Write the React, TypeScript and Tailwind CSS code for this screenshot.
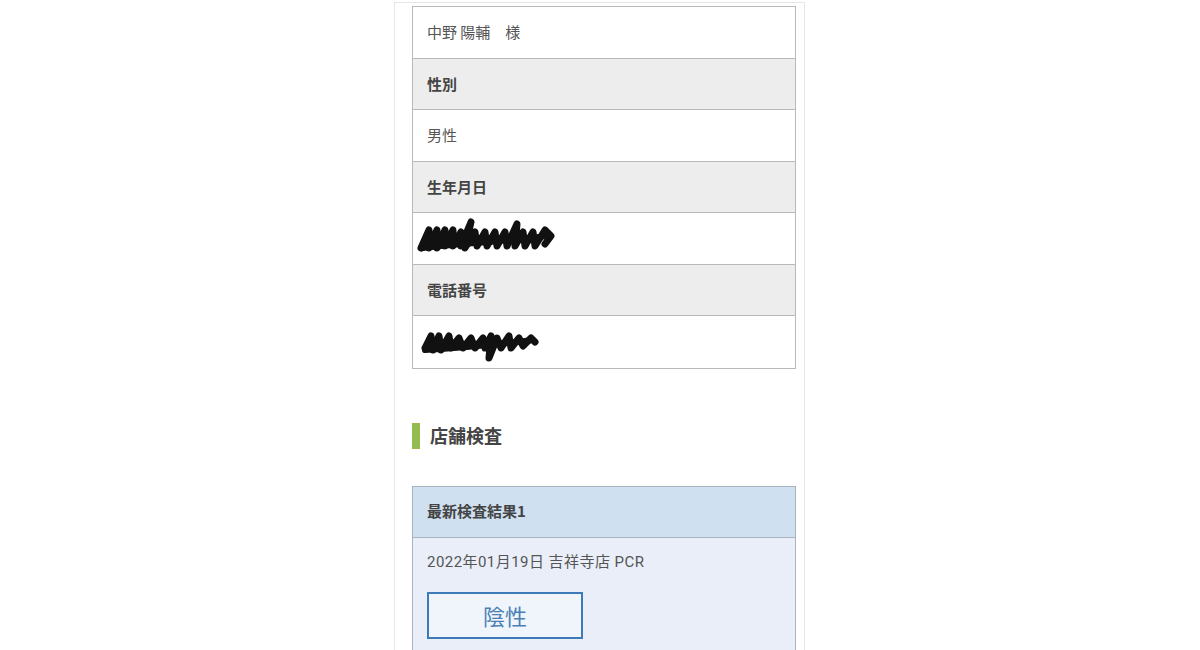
import React from "react";

const font = { fontFamily: '"Noto Sans CJK JP", "Noto Sans", sans-serif' };
const latin = { fontFamily: 'Roboto, "Noto Sans CJK JP", sans-serif' };

function Scribble1() {
  return (
    <svg width="140" height="40" viewBox="0 0 140 40" className="block">
      <path
        d="M4 30 L12 12 L12 30 L20 12 L20 30 L28 12 L28 28 L36 12 L36 28 L44 14 L44 28 L54 4 L48 30 L58 14 L60 28 L68 14 L70 28 L78 14 L80 28 L88 14 L90 28 L100 6 L98 28 L106 14 L108 28 L116 14 L118 28 L128 12 L134 18 L128 26"
        fill="none"
        stroke="#111"
        strokeWidth="7"
        strokeLinecap="round"
        strokeLinejoin="round"
      />
      <path d="M6 30 C40 26 80 24 130 18" fill="none" stroke="#111" strokeWidth="6" strokeLinecap="round" />
    </svg>
  );
}

function Scribble2() {
  return (
    <svg width="125" height="40" viewBox="0 0 125 40" className="block">
      <path
        d="M6 26 L12 14 L14 28 L20 14 L22 28 L30 14 L32 26 L40 16 L44 26 L52 16 L56 26 L64 16 L66 26 L72 14 L70 36 L78 16 L82 26 L90 14 L92 26 L100 16 L104 24 L112 16 L116 20"
        fill="none"
        stroke="#111"
        strokeWidth="7"
        strokeLinecap="round"
        strokeLinejoin="round"
      />
      <path d="M6 28 C40 26 80 22 114 18" fill="none" stroke="#111" strokeWidth="6" strokeLinecap="round" />
    </svg>
  );
}

function Row({ children, head, last }: { children: React.ReactNode; head?: boolean; last?: boolean }) {
  return (
    <div
      className={
        "h-[51.5px] flex items-center px-[14px] text-[15px] " +
        (last ? "" : "border-b border-[#b9b9b9] ") +
        (head ? "bg-[#ededed] font-bold text-[#444]" : "bg-white text-[#555]")
      }
    >
      {children}
    </div>
  );
}

export default function App() {
  return (
    <div className="w-[1200px] h-[650px] bg-white overflow-hidden" style={font}>
      <div className="ml-[394px] mt-[2px] w-[411px] h-[648px] border-l border-r border-t border-[#e6e6e6] pl-[17px] pt-[3px]">
        <div className="w-[384px] border border-[#b9b9b9]">
          <Row>中野 陽輔　様</Row>
          <Row head>性別</Row>
          <Row>男性</Row>
          <Row head>生年月日</Row>
          <div className="h-[51.5px] flex items-center pl-[4px] bg-white border-b border-[#b9b9b9]">
            <Scribble1 />
          </div>
          <Row head>電話番号</Row>
          <div className="h-[51.5px] flex items-center pl-[6px] bg-white">
            <Scribble2 />
          </div>
        </div>

        <div className="mt-[54px] flex items-center h-[26px]">
          <div className="w-[8px] h-[26px] bg-[#94bb4e]" />
          <div className="ml-[10px] text-[18px] font-bold text-[#444]">店舗検査</div>
        </div>

        <div className="mt-[37px] w-[384px] border border-[#a9b3bd] bg-[#e9eef8]">
          <div className="h-[51px] bg-[#cfe0f1] border-b border-[#a9b3bd] flex items-center px-[14px] text-[15px] font-bold text-[#444]">
            最新検査結果1
          </div>
          <div className="px-[14px] pt-[13px] pb-[20px]">
            <div className="text-[15px] text-[#555] leading-[22px] tracking-[0.45px]" style={latin}>
              2022年01月19日 吉祥寺店 PCR
            </div>
            <div className="mt-[19px] w-[156px] h-[47px] border-2 border-[#3d7ab8] bg-[#f0f4fb] flex items-center justify-center text-[22px] text-[#4a80b6]">
              陰性
            </div>
          </div>
        </div>
      </div>
    </div>
  );
}
